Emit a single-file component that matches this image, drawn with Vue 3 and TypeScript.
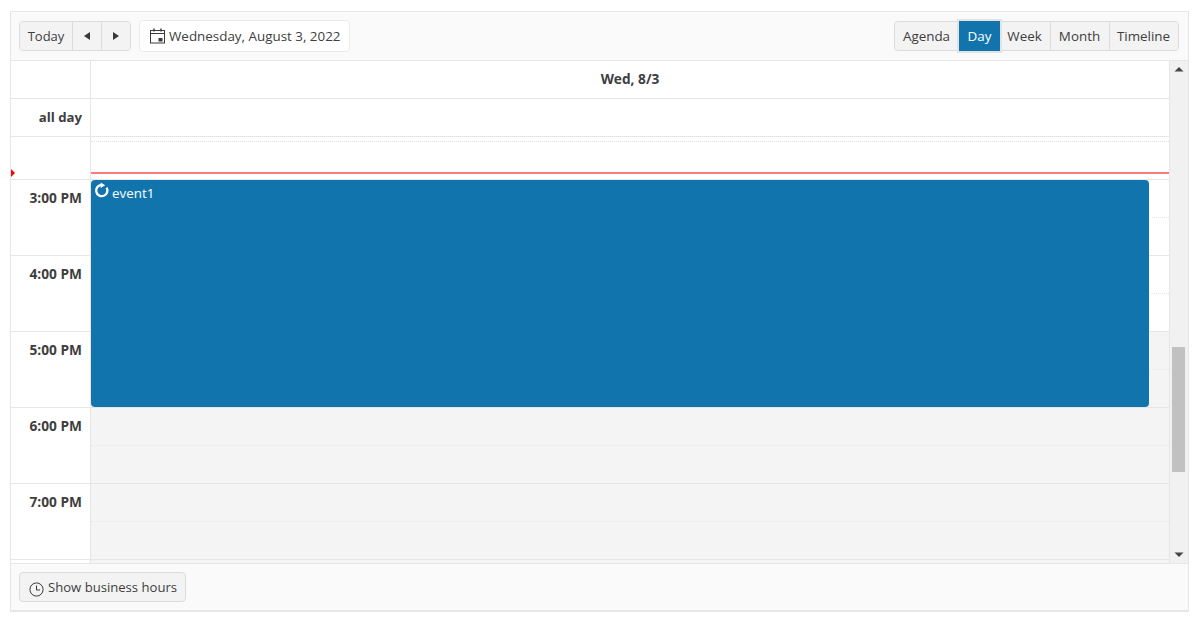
<script setup lang="ts">
interface Slot { key: number; label: string; off: boolean }
const views = ['Agenda', 'Day', 'Week', 'Month', 'Timeline']
const hours = [
  { label: '3:00 PM', off: false },
  { label: '4:00 PM', off: false },
  { label: '5:00 PM', off: true },
  { label: '6:00 PM', off: true },
  { label: '7:00 PM', off: true },
]
const slots: Slot[] = []
hours.forEach((h, i) => {
  slots.push({ key: i * 2, label: h.label, off: h.off })
  slots.push({ key: i * 2 + 1, label: '', off: h.off })
})
</script>

<template>
  <div class="page">
    <div class="scheduler">
      <div class="toolbar">
        <div class="group nav">
          <button class="btn today">Today</button>
          <button class="btn icon-btn">
            <svg width="8" height="8" viewBox="0 0 8 8"><path d="M7 0V8L1 4Z" fill="#3a3a3a" /></svg>
          </button>
          <button class="btn icon-btn">
            <svg width="8" height="8" viewBox="0 0 8 8"><path d="M1 0V8L7 4Z" fill="#3a3a3a" /></svg>
          </button>
        </div>
        <button class="date-btn">
          <svg width="16" height="16" viewBox="0 0 16 16" fill="none" stroke="#3a3a3a" stroke-width="1">
            <rect x="0.5" y="2.5" width="14" height="12.5" />
            <path d="M0.5 5.5H14.5" />
            <path d="M4 0.5V3.5M11 0.5V3.5" stroke-width="1.4" />
            <rect x="8.5" y="10" width="4" height="3.5" fill="#3a3a3a" stroke="none" />
          </svg>
          <span>Wednesday, August 3, 2022</span>
        </button>
        <div class="spacer"></div>
        <div class="group views">
          <button v-for="v in views" :key="v" class="btn" :class="{ active: v === 'Day' }">{{ v }}</button>
        </div>
      </div>

      <div class="body">
        <div class="main">
          <div class="head-row">
            <div class="gutter"></div>
            <div class="head-cell">Wed, 8/3</div>
          </div>
          <div class="head-row">
            <div class="gutter allday">all day</div>
            <div class="head-cell"></div>
          </div>
          <div class="grid">
            <div class="lead-row">
              <div class="gutter-cell lead"></div>
              <div class="cell lead"></div>
            </div>
            <div class="half-row">
              <div class="gutter-cell"></div>
              <div class="cell major-end"></div>
            </div>
            <div v-for="(s, i) in slots" :key="s.key" class="row">
              <div class="gutter-cell" :class="{ major: i % 2 === 1 }">{{ s.label }}</div>
              <div class="cell" :class="{ off: s.off, major: i % 2 === 1 }"></div>
            </div>
            <div class="tail-row">
              <div class="gutter-cell"></div>
              <div class="cell off"></div>
            </div>
            <div class="now-line"></div>
            <div class="now-arrow"></div>
            <div class="event">
              <svg width="14" height="15" viewBox="0 0 14 15" fill="none">
                <path d="M11.6 4.6A5.6 5.6 0 1 1 6.6 1.9" stroke="#fff" stroke-width="2.3" />
                <path d="M5.6 -0.4V5L10.2 2.2Z" fill="#fff" />
              </svg>
              <span>event1</span>
            </div>
          </div>
        </div>
        <div class="scrollbar">
          <svg class="arrow" width="10" height="6" viewBox="0 0 10 6"><path d="M0.5 5.5H9.5L5 1Z" fill="#444" /></svg>
          <div class="track"><div class="thumb"></div></div>
          <svg class="arrow" width="10" height="6" viewBox="0 0 10 6"><path d="M0.5 0.5H9.5L5 5Z" fill="#444" /></svg>
        </div>
      </div>

      <div class="footer">
        <button class="btn solo">
          <svg width="15" height="15" viewBox="0 0 15 15" fill="none" stroke="#3a3a3a" stroke-width="1">
            <circle cx="7.5" cy="7.5" r="6.6" />
            <path d="M7.5 3.5V8H11" />
          </svg>
          <span>Show business hours</span>
        </button>
      </div>
    </div>
  </div>
</template>

<style>
html, body { margin: 0; background: #fff; }
</style>

<style scoped>
.page {
  padding: 11px 15px 0 10px;
  font-family: "Open Sans", "Noto Sans", sans-serif;
  font-size: 13.4px;
  color: #3e3e3e;
}
.scheduler {
  width: 1179px;
  height: 601px;
  box-sizing: border-box;
  border: 1px solid #e6e6e6;
  border-bottom-width: 2px;
  display: flex;
  flex-direction: column;
}
.toolbar {
  height: 49px;
  box-sizing: border-box;
  flex: none;
  display: flex;
  align-items: center;
  gap: 8px;
  padding: 0 9px 1px 8px;
  background: #fafafa;
  border-bottom: 1px solid #e6e6e6;
}
.spacer { flex: 1; }
.group {
  display: flex;
  height: 30px;
  box-sizing: border-box;
  border: 1px solid #dbdbdb;
  border-radius: 4px;
  background: #f3f3f3;
}
.btn {
  font: inherit;
  color: #3e3e3e;
  background: #f3f3f3;
  border: 0;
  border-left: 1px solid #dbdbdb;
  padding: 0;
  margin: 0;
  display: flex;
  align-items: center;
  justify-content: center;
  box-sizing: border-box;
}
.btn:first-child { border-left: 0; border-radius: 3px 0 0 3px; }
.btn:last-child { border-radius: 0 3px 3px 0; }
.today { width: 52px; font-size: 13px; }
.icon-btn { width: 29px; }
.views .btn:nth-child(1) { width: 64px; padding-right: 1px; }
.views .btn:nth-child(2) { width: 41px; }
.views .btn:nth-child(3) { width: 50px; border-left: 0; padding-right: 1px; }
.views .btn:nth-child(4) { width: 59px; padding-right: 1px; }
.views .btn:nth-child(5) { width: 69px; padding-right: 1px; }
.btn.active {
  background: #1274ac;
  color: #fff;
  border-left: 0;
  margin: -1px 0;
  outline: 2px solid #e3e3e3;
  position: relative;
}
.date-btn {
  font: inherit;
  color: #3e3e3e;
  width: 211px;
  height: 32px;
  box-sizing: border-box;
  background: #fff;
  border: 1px solid #ebebeb;
  border-radius: 4px;
  padding: 0 0 0 10px;
  display: flex;
  align-items: center;
  gap: 3px;
}
.body { flex: 1; min-height: 0; display: flex; }
.main { flex: 1; min-width: 0; display: flex; flex-direction: column; }
.head-row {
  flex: none;
  height: 38px;
  box-sizing: border-box;
  display: flex;
  border-bottom: 1px solid #e6e6e6;
}
.gutter {
  flex: none;
  width: 80px;
  box-sizing: border-box;
  border-right: 1px solid #e6e6e6;
}
.allday {
  font-weight: 700;
  font-size: 13.2px;
  text-align: right;
  padding: 9px 8px 0 0;
}
.head-cell {
  flex: 1;
  text-align: center;
  font-weight: 700;
  font-size: 13.7px;
  padding-top: 8px;
}
.grid {
  position: relative;
  flex: 1;
  min-height: 0;
  overflow: hidden;
}
.lead-row, .half-row, .row, .tail-row { display: flex; box-sizing: border-box; }
.lead-row { height: 5px; }
.half-row { height: 38px; }
.row { height: 38px; }
.tail-row { height: 4px; }
.gutter-cell {
  flex: none;
  width: 80px;
  box-sizing: border-box;
  border-right: 1px solid #e6e6e6;
  font-weight: 700;
  font-size: 13.7px;
  text-align: right;
  padding: 8px 8px 0 0;
}
.gutter-cell.major { border-bottom: 1px solid #e6e6e6; }
.half-row .gutter-cell { border-bottom: 1px solid #e6e6e6; }
.cell {
  flex: 1;
  box-sizing: border-box;
  border-bottom: 1px dotted #e6e6e6;
}
.cell.lead { border-bottom: 1px dotted #e0e0e0; }
.cell.major, .cell.major-end { border-bottom: 1px solid #e6e6e6; }
.cell.off { background: #f4f4f4; }
.tail-row .cell { border-bottom: 0; }
.now-line {
  position: absolute;
  left: 80px;
  right: 0;
  top: 35px;
  height: 2px;
  background: #ff7b7b;
}
.now-arrow {
  position: absolute;
  left: 0;
  top: 32px;
  width: 0;
  height: 0;
  border-top: 4px solid transparent;
  border-bottom: 4px solid transparent;
  border-left: 4px solid #f00;
}
.event {
  position: absolute;
  left: 80px;
  top: 43px;
  width: 1058px;
  height: 227px;
  box-sizing: border-box;
  background: #1274ac;
  border-radius: 4px;
  color: #fff;
  padding: 3px 0 0 4px;
  display: flex;
  align-items: flex-start;
  gap: 3px;
  line-height: 20px;
}
.event svg { overflow: visible; flex: none; }
.scrollbar {
  flex: none;
  width: 19px;
  box-sizing: border-box;
  border-left: 1px solid #e6e6e6;
  background: #f1f1f1;
  display: flex;
  flex-direction: column;
  align-items: center;
}
.arrow { flex: none; margin: 5px 0; }
.track { flex: 1; width: 100%; position: relative; }
.thumb {
  position: absolute;
  left: 2px;
  width: 13px;
  top: 270px;
  height: 125px;
  background: #c1c1c1;
}
.footer {
  flex: none;
  height: 47px;
  box-sizing: border-box;
  display: flex;
  align-items: center;
  padding: 0 8px;
  background: #fafafa;
  border-top: 1px solid #e6e6e6;
}
.btn.solo {
  width: 167px;
  height: 30px;
  font-size: 13.1px;
  border: 1px solid #dbdbdb;
  border-radius: 4px;
  gap: 4px;
  padding: 0 0 0 9px;
  justify-content: flex-start;
}
.btn.solo svg { margin-top: 5px; }
</style>
